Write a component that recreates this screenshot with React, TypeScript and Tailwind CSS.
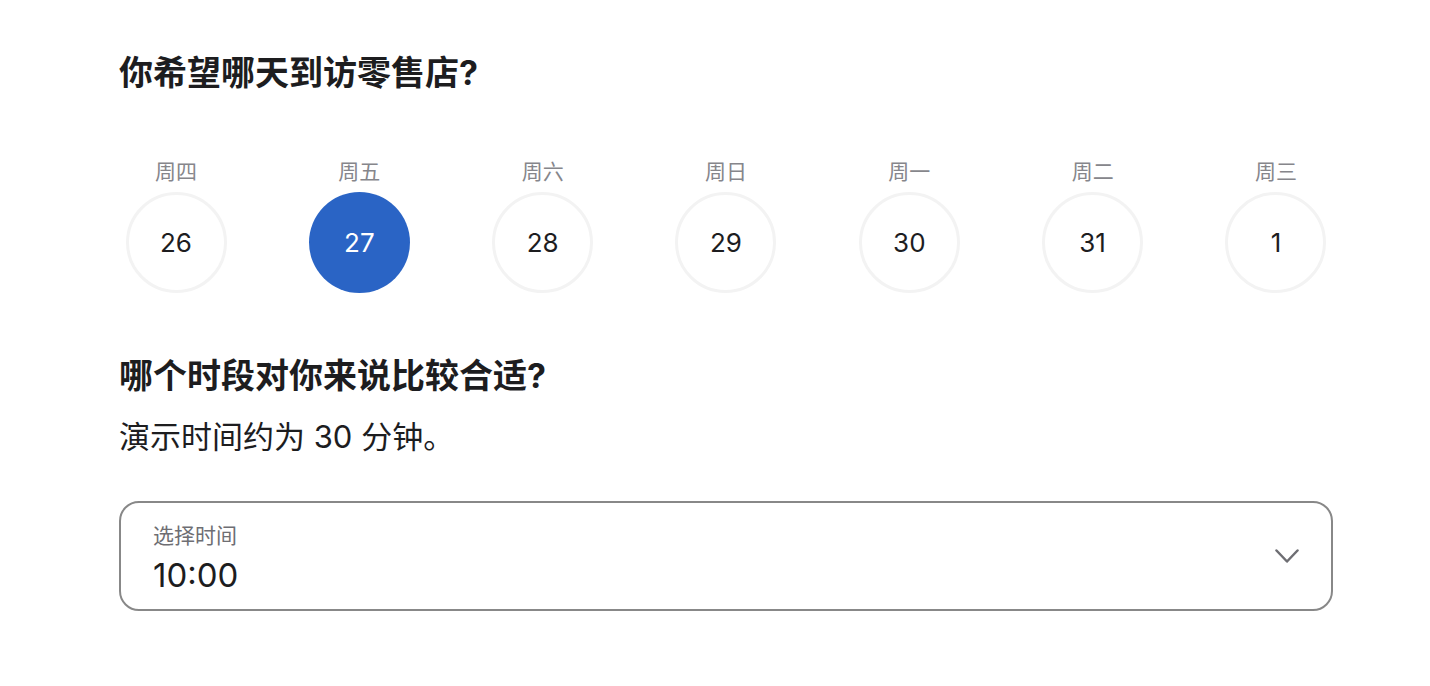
const days = [
  { label: '周四', num: '26' },
  { label: '周五', num: '27', active: true },
  { label: '周六', num: '28' },
  { label: '周日', num: '29' },
  { label: '周一', num: '30' },
  { label: '周二', num: '31' },
  { label: '周三', num: '1' },
];

export default function App() {
  return (
    <div
      className="min-h-[686px] w-full bg-white text-[#1d1d1f]"
      style={{ fontFamily: 'Inter, "Noto Sans CJK SC", sans-serif' }}
    >
      <div className="mx-[119px] w-[1214px] pt-[52px]">
        <h2 className="text-[34px] font-bold leading-[42px]">你希望哪天到访零售店?</h2>

        {/* Date picker row */}
        <div className="mt-[65px] flex justify-between px-[7px]">
          {days.map((d) => (
            <div key={d.num} className="flex w-[100px] flex-col items-center">
              <span className="text-[21px] leading-[26px] text-[#86868b]">{d.label}</span>
              <button
                className={
                  d.active
                    ? 'mt-[7px] flex h-[101px] w-[101px] items-center justify-center rounded-full bg-[#2a64c5] text-[26px] text-white'
                    : 'mt-[7px] flex h-[101px] w-[101px] items-center justify-center rounded-full border-[3px] border-[#f3f3f3] text-[26px] text-[#1d1d1f]'
                }
              >
                {d.num}
              </button>
            </div>
          ))}
        </div>

        <h2 className="mt-[62px] text-[34px] font-bold leading-[42px]">哪个时段对你来说比较合适?</h2>
        <p className="mt-[20px] text-[31px] leading-[40px]">演示时间约为 30 分钟。</p>

        {/* Time select */}
        <div className="mt-[44px] flex h-[110px] items-center justify-between rounded-[20px] border-2 border-[#888888] pl-[32px] pr-[32px]">
          <div className="flex flex-col pt-[6px]">
            <span className="text-[21px] leading-[26px] text-[#6e6e73]">选择时间</span>
            <span className="mt-[6px] text-[33px] leading-[40px]">10:00</span>
          </div>
          <svg width="24" height="14" viewBox="0 0 24 14" fill="none" className="text-[#6e6e73]">
            <path d="M1.5 1.5l10.5 11 10.5-11" stroke="currentColor" strokeWidth="2.5" strokeLinecap="round" strokeLinejoin="round" />
          </svg>
        </div>
      </div>
    </div>
  );
}
